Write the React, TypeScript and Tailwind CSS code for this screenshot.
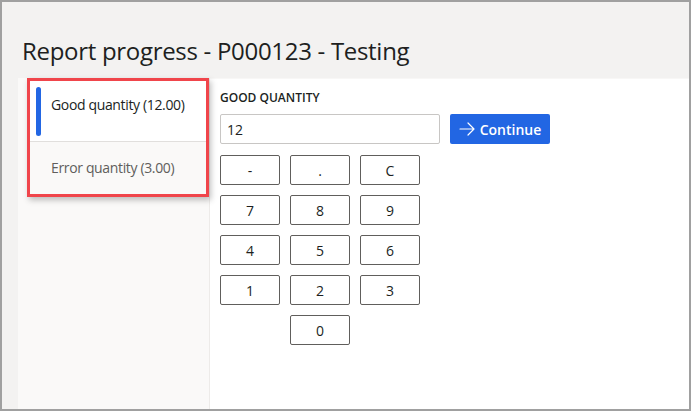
const keys = [
  ["-", ".", "C"],
  ["7", "8", "9"],
  ["4", "5", "6"],
  ["1", "2", "3"],
  ["", "0", ""],
];

function Key({ label }: { label: string }) {
  if (!label) return <div className="w-[60px] h-[30px]" />;
  return (
    <button className="w-[60px] h-[30px] border border-[#605e5c] rounded-[2px] bg-white text-[14px] text-[#201f1e] flex items-center justify-center">
      {label}
    </button>
  );
}

export default function App() {
  return (
    <div
      className="w-[691px] h-[411px] border-2 border-[#a0a0a0] bg-[#f3f2f1] flex flex-col overflow-hidden"
      style={{ fontFamily: '"Open Sans", "Noto Sans", sans-serif' }}
    >
      {/* header */}
      <div className="h-[76px] pl-[20px] pt-[34px]">
        <h1 className="text-[24px] leading-[30px] text-[#201f1e] tracking-[-0.3px]">
          Report progress - P000123 - Testing
        </h1>
      </div>

      <div className="flex-1 flex ml-[16px] bg-white border-t border-[#f8f7f6]">
        {/* side tabs */}
        <div className="w-[192px] bg-[#faf9f8] border-r border-[#edebe9] pl-[9px] -mt-px">
          <div className="w-[182px] border-[3px] border-[#f0454b] shadow-[2px_3px_6px_rgba(0,0,0,0.25)]">
            <div className="relative h-[61px] bg-white border-b border-[#e1dfdd] pl-[21px] pt-[11px]">
              <div className="absolute left-[6px] top-[6px] w-[5px] h-[49px] rounded-[3px] bg-[#2266e3]" />
              <span className="text-[14px] leading-[18px] tracking-[-0.35px] text-[#201f1e]">Good quantity (12.00)</span>
            </div>
            <div className="h-[52px] bg-[#faf9f8] pl-[21px] flex items-center">
              <span className="text-[14px] leading-[18px] tracking-[-0.35px] text-[#605e5c]">Error quantity (3.00)</span>
            </div>
          </div>
        </div>

        {/* entry */}
        <div className="flex-1 pl-[10px] pt-[11px]">
          <div className="text-[12px] leading-[16px] font-semibold text-[#201f1e]">GOOD QUANTITY</div>
          <div className="flex gap-[10px] mt-[8px]">
            <div className="w-[220px] h-[30px] border border-[#c8c6c4] rounded-[2px] px-[6px] flex items-center text-[14px] text-[#201f1e]">
              12
            </div>
            <button className="w-[100px] h-[30px] bg-[#2266e3] rounded-[2px] text-white text-[14px] font-semibold flex items-center justify-center gap-[5px]">
              <svg width="16" height="14" viewBox="0 0 16 14" fill="none" stroke="currentColor" strokeWidth="1.2" strokeLinecap="round" strokeLinejoin="round">
                <path d="M1 7h14M9 1l6 6-6 6" />
              </svg>
              Continue
            </button>
          </div>
          <div className="flex flex-col gap-[10px] mt-[11px]">
            {keys.map((row, i) => (
              <div key={i} className="flex gap-[10px]">
                {row.map((k, j) => (
                  <Key key={j} label={k} />
                ))}
              </div>
            ))}
          </div>
        </div>
      </div>
    </div>
  );
}
